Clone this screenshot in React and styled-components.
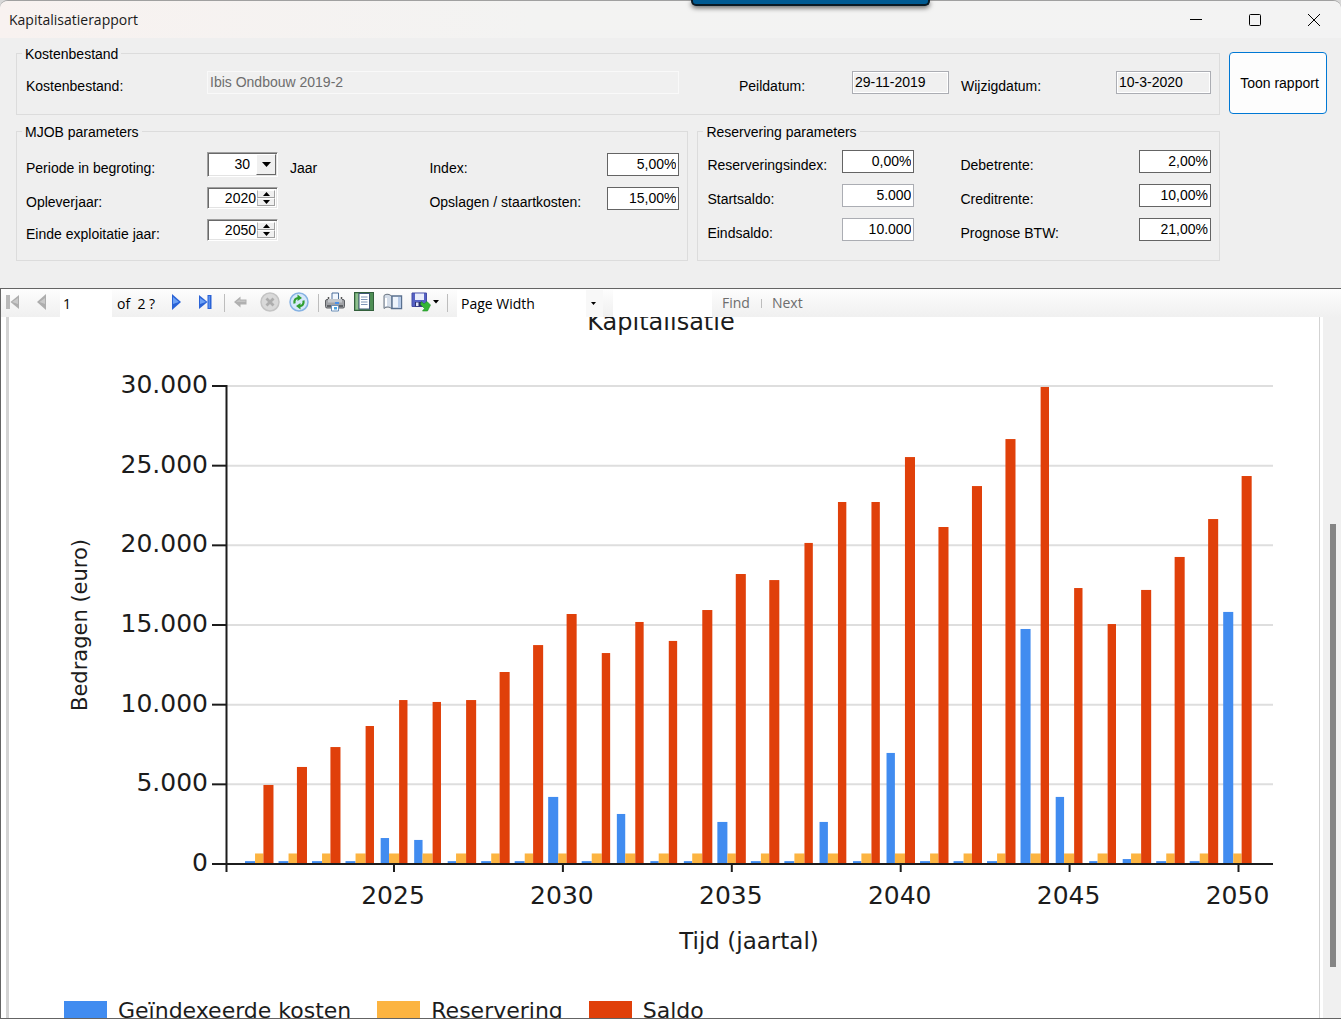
import React from 'react';
import styled, { createGlobalStyle } from 'styled-components';

const GlobalStyle = createGlobalStyle`
  * {
    box-sizing: border-box;
  }
  body {
    margin: 0;
    background: #d8d8d8;
    overflow: hidden;
  }
  button, input, select {
    font: inherit;
    color: inherit;
  }
`;

// Window
const Window = styled.div`
  display: flex;
  flex-direction: column;
  height: 100vh;
  border-top: 1px solid #a0a0a0;
  border-radius: 8px 8px 0 0;
  overflow: hidden;
  background: #efefef;
  color: #000;
  font-family: 'Liberation Sans', Arial, sans-serif;
  font-size: 14px;
`;

const TitleBar = styled.header`
  display: flex;
  align-items: center;
  justify-content: space-between;
  flex: none;
  height: 37px;
  padding-left: 9px;
  background: linear-gradient(90deg, #f8f2f0, #f3f3f2 40%, #f3f3f3);
`;

const Title = styled.h1`
  margin: 0;
  font-family: 'Open Sans', sans-serif;
  font-size: 14px;
  font-weight: 400;
  color: #1a1a1a;
`;

const WindowButtons = styled.div`
  display: flex;
  gap: 5px;
`;

const WindowButton = styled.button`
  display: flex;
  align-items: center;
  justify-content: center;
  width: 54px;
  height: 36px;
  padding: 0;
  border: none;
  background: none;
`;

// Edge of the screen-share bar hanging over the title bar
const ShareBar = styled.div`
  position: absolute;
  top: 0;
  left: 691px;
  width: 239px;
  height: 6px;
  border: solid #0a1a24;
  border-width: 0 2px 2px;
  border-radius: 0 0 5px 5px;
  background: #005a92;
  box-shadow: 0 2px 5px rgba(0, 0, 0, 0.6);
`;

// Parameter form
const Form = styled.form`
  display: grid;
  grid-template-columns: minmax(0, 673fr) minmax(0, 523fr) 98px;
  gap: 8px 9px;
  flex: none;
  padding: 7px 14px 27px 16px;
`;

const Group = styled.fieldset`
  min-width: 0;
  margin: 0;
  padding: ${props => props.top || 8}px 8px ${props => props.bottom || 14}px 9px;
  border: 1px solid #dcdcdc;
  ${props => props.wide && `grid-column: span 2;`}
`;

const Legend = styled.legend`
  margin-left: -4px;
  padding: 2px 3px 0;
  line-height: 14px;
`;

const Fields = styled.div`
  display: grid;
  grid-template-columns: ${props => props.columns};
  grid-template-rows: ${props => props.rows};
  align-items: center;
`;

const Label = styled.label`
  padding-top: 8px;
  padding-left: ${props => props.indent || 0}px;
  line-height: 16px;
  white-space: nowrap;
`;

const TextBox = styled.input`
  width: 100%;
  height: 23px;
  min-width: 0;
  padding: 0 2px;
  border: 1px solid ${props => (props.$soft ? '#abadb3' : '#646464')};
  border-radius: 0;
  background: #fff;
  text-align: right;
  outline: none;
`;

const DateBox = styled(TextBox)`
  border-color: #abadb3;
  background: #f0f0f0;
  box-shadow: inset 0 0 0 1px #fff;
  text-align: left;
`;

const FileBox = styled(TextBox)`
  border-color: #f9f9f9;
  background: #f0f0f0;
  color: #6d6d6d;
  text-align: left;
`;

const Sunken = styled.div`
  display: grid;
  grid-template-columns: minmax(0, 1fr) auto;
  width: 71px;
  height: ${props => props.height}px;
  border: 1px solid;
  border-color: #a0a0a0 #fff #fff #a0a0a0;
  box-shadow: inset 1px 1px 0 #696969, inset -1px -1px 0 #e3e3e3;
  background: #fff;
`;

const Select = styled.select`
  grid-area: 1 / 1 / 2 / 3;
  padding: 0 27px 0 4px;
  border: none;
  background: none;
  appearance: none;
  text-align: right;
  text-align-last: right;
  outline: none;
`;

const SelectArrow = styled.span`
  grid-area: 1 / 2;
  display: flex;
  align-items: center;
  justify-content: center;
  width: 20px;
  margin: 1px 1px 1px 0;
  border: 1px solid;
  border-color: #fff #696969 #696969 #fff;
  background: #f0f0f0;
  pointer-events: none;
`;

const SpinInput = styled.input`
  min-width: 0;
  width: 100%;
  padding: 0 1px 0 0;
  border: none;
  background: none;
  text-align: right;
  outline: none;
`;

const SpinButtons = styled.div`
  display: flex;
  flex-direction: column;
  width: 18px;
  margin: 2px 2px 2px 0;
`;

const SpinButton = styled.button`
  display: flex;
  flex: 1;
  align-items: center;
  justify-content: center;
  min-height: 0;
  padding: 0;
  border: 1px solid;
  border-color: #fff #a0a0a0 #a0a0a0 #b4b4b4;
  background: #f0f0f0;
`;

const ReportButton = styled.button`
  height: 62px;
  margin-top: 7px;
  padding: 0 0 0 3px;
  border: 1px solid #0078d4;
  border-radius: 4px;
  background: #fdfdfd;
  white-space: nowrap;
`;

// Report viewer
const Viewer = styled.section`
  display: flex;
  flex: 1;
  flex-direction: column;
  min-height: 0;
  border: solid #646464;
  border-width: 1px 0 1px 1px;
  background: #fff;
`;

const Toolbar = styled.div`
  display: flex;
  align-items: center;
  flex: none;
  height: 28px;
  background: linear-gradient(#fdfdfd, #f0f0f0);
  font-family: 'Open Sans', sans-serif;
`;

const ToolButton = styled.button`
  display: flex;
  align-items: center;
  justify-content: center;
  gap: 2px;
  flex: none;
  width: ${props => (props.$menu ? 29 : 23)}px;
  height: 26px;
  margin: 0 3px;
  padding: 0 0 2px;
  border: none;
  background: none;
  &:first-child {
    margin-left: 0;
  }
`;

const Separator = styled.span`
  flex: none;
  width: 1px;
  height: ${props => (props.$small ? 9 : 18)}px;
  margin: ${props => (props.$small ? '0 0 0 11px' : '0 1px 0 5px')};
  background: #bdbdbd;
`;

const PageInput = styled.input`
  width: 52px;
  height: 27px;
  margin-left: 4px;
  padding: 0 3px;
  border: none;
  background: #fff;
`;

const PageCount = styled.span`
  width: 49px;
  padding-left: 5px;
  white-space: pre;
`;

const ZoomBox = styled.div`
  display: grid;
  grid-template-columns: 1fr 17px;
  align-items: center;
  justify-items: center;
  width: 146px;
  height: 27px;
  margin-left: 8px;
  background: linear-gradient(90deg, #fff 129px, #f8f8f8 129px);
`;

const ZoomSelect = styled.select`
  grid-area: 1 / 1 / 2 / 3;
  width: 100%;
  height: 27px;
  padding: 0 4px;
  border: none;
  background: none;
  appearance: none;
  outline: none;
`;

const ZoomArrow = styled.svg`
  grid-area: 1 / 2;
  margin-right: 3px;
  pointer-events: none;
`;

const SearchInput = styled.input`
  width: 99px;
  height: 27px;
  margin-left: 10px;
  border: none;
  background: #fff;
`;

const TextButton = styled.button`
  margin-left: 10px;
  padding: 0 0 2px;
  border: none;
  background: none;
  color: #6d6d6d;
`;

const Viewport = styled.div`
  display: flex;
  flex: 1;
  min-height: 0;
  padding-left: 5px;
`;

const Page = styled.div`
  flex: 1;
  min-width: 0;
  margin-right: 3px;
  border: solid #d3d3d3;
  border-width: 0 1px 0 3px;
  overflow: hidden;
  font-family: 'DejaVu Sans', Verdana, sans-serif;
  color: #1c1c1c;
`;

const Plot = styled.svg`
  display: block;
  width: 100%;
  height: auto;
  fill: #1c1c1c;
`;

const ChartLegend = styled.ul`
  display: flex;
  gap: 26px;
  margin: 1px 0 0 55px;
  padding: 0;
  list-style: none;
  font-size: 22px;
  line-height: 26px;
`;

const LegendItem = styled.li`
  display: flex;
  align-items: center;
  gap: 11px;
  white-space: nowrap;
`;

const Swatch = styled.span`
  width: 43px;
  height: 20px;
  background: ${props => props.color};
`;

const ScrollTrack = styled.div`
  display: grid;
  grid-template-rows: 207fr 443fr 51fr;
  flex: none;
  width: 18px;
  padding: 0 5px 0 7px;
  background: #f0f0f0;
`;

const ScrollThumb = styled.div`
  grid-row: 2;
  background: #858585;
`;

// Chart data, amounts in euro
const BLUE = '#418cf0';
const ORANGE = '#fcb441';
const RED = '#e0400a';

const RESERVE = 660;
const FIRST_YEAR = 2021;
const saldo = [
  4960, 6090, 7340, 8660, 10290, 10170, 10290, 12050, 13740, 15690,
  13240, 15190, 14000, 15940, 18200, 17820, 20150, 22720, 22720, 25540,
  21150, 23720, 26670, 29940, 17320, 15060, 17200, 19270, 21650, 24350,
];
const costs = {
  2025: 1630,
  2026: 1510,
  2030: 4210,
  2032: 3140,
  2035: 2640,
  2038: 2640,
  2040: 6970,
  2044: 14750,
  2045: 4210,
  2047: 310,
  2050: 15820,
};

const PLOT = { left: 217, right: 1263, base: 547, height: 478, max: 30000 };
const yOf = value => PLOT.base - (value / PLOT.max) * PLOT.height;
const xOfYear = year => 385 + (year - 2025) * 33.78;
// bar edges snap to the coarse pixel grid of the chart control
const edge = (index, bar) => 236 + Math.floor(0.46 + 5.57 * bar + 20.15 * index) * 1.675;
const format = value => value.toLocaleString('de-DE');

function Bar({ index, slot, value, color }) {
  const x = edge(index, slot);
  const y = yOf(value);
  return <rect x={x} y={y} width={edge(index, slot + 1) - x} height={PLOT.base - y} fill={color} />;
}

function Chart() {
  return (
    <Plot viewBox="0 0 1310 680" role="img" aria-label="Kapitalisatie">
      <text x="652" y="13" fontSize="24" textAnchor="middle">Kapitalisatie</text>
      {[5000, 10000, 15000, 20000, 25000, 30000].map(v => (
        <line key={v} x1={PLOT.left} x2={PLOT.right + 1} y1={yOf(v)} y2={yOf(v)} stroke="#dedede" strokeWidth="2" />
      ))}
      {saldo.map((value, i) => {
        const year = FIRST_YEAR + i;
        return (
          <g key={year}>
            <Bar index={i} slot={0} value={costs[year] || 180} color={BLUE} />
            <Bar index={i} slot={1} value={RESERVE} color={ORANGE} />
            <Bar index={i} slot={2} value={value} color={RED} />
          </g>
        );
      })}
      <g stroke="#1c1c1c" strokeWidth="2">
        <line x1="217.5" x2="217.5" y1="68" y2="555" />
        <line x1="203" x2={PLOT.right + 1} y1={PLOT.base} y2={PLOT.base} />
        {[5000, 10000, 15000, 20000, 25000, 30000].map(v => (
          <line key={v} x1="203" x2="217" y1={yOf(v)} y2={yOf(v)} />
        ))}
        {[2025, 2030, 2035, 2040, 2045, 2050].map(year => (
          <line key={year} x1={xOfYear(year)} x2={xOfYear(year)} y1={PLOT.base} y2="555" />
        ))}
      </g>
      <g fontSize="25">
        {[0, 5000, 10000, 15000, 20000, 25000, 30000].map(v => (
          <text key={v} x="199" y={yOf(v) + 7} textAnchor="end">{format(v)}</text>
        ))}
        {[2025, 2030, 2035, 2040, 2045, 2050].map(year => (
          <text key={year} x={xOfYear(year) - 1} y="587" textAnchor="middle">{year}</text>
        ))}
      </g>
      <g textAnchor="middle">
        <text x="740" y="632" fontSize="23">Tijd (jaartal)</text>
        <text transform="translate(78 308) rotate(-90)" fontSize="21">Bedragen (euro)</text>
      </g>
    </Plot>
  );
}

// Toolbar icons
const FirstIcon = () => (
  <svg width="14" height="16" viewBox="0 0 14 16">
    <rect x="0" y="1" width="4" height="14" fill="#b9b9b9" />
    <path d="M13 1v14L4.500 8z" fill="#adadad" />
    <path d="M12 4v6L6 8z" fill="#c9c9c9" />
  </svg>
);

const PrevIcon = () => (
  <svg width="10" height="16" viewBox="0 0 10 16">
    <path d="M9 0v16L0 8z" fill="#adadad" />
    <path d="M8 4v6L2.500 8z" fill="#c9c9c9" />
  </svg>
);

const NextIcon = () => (
  <svg width="10" height="16" viewBox="0 0 10 16">
    <path d="M1 0v16L10 8z" fill="#2a63d6" />
    <path d="M2 3v7l6-2z" fill="#6ea2f5" />
  </svg>
);

const LastIcon = () => (
  <svg width="14" height="16" viewBox="0 0 14 16">
    <path d="M1 1v14l8.500-7z" fill="#2a63d6" />
    <path d="M2 4v6l6-2z" fill="#6ea2f5" />
    <rect x="9.500" y="1" width="4" height="14" fill="#2a63d6" />
    <rect x="10.500" y="2" width="1.500" height="12" fill="#5b90ee" />
  </svg>
);

const BackIcon = () => (
  <svg width="13" height="12" viewBox="0 0 13 12">
    <path d="M0 6L6.500 0.500V3.500H12.500V8.500H6.500V11.500z" fill="#b0b0b0" />
    <path d="M2 6l4-3v1.500h5.500V6z" fill="#c4c4c4" />
  </svg>
);

const StopIcon = () => (
  <svg width="20" height="20" viewBox="0 0 20 20">
    <circle cx="10" cy="10" r="9" fill="#d9d9d9" stroke="#c4c4c4" strokeWidth="1.500" />
    <path d="M6.500 6.500l7 7M13.500 6.500l-7 7" stroke="#adadad" strokeWidth="2.800" />
  </svg>
);

const RefreshIcon = () => (
  <svg width="20" height="20" viewBox="0 0 20 20">
    <circle cx="10" cy="10" r="9" fill="#d5e8fa" stroke="#86b2e3" strokeWidth="1.500" />
    <path d="M5.500 11.500C5 8 6.500 6 9.500 6" fill="none" stroke="#2f9e2f" strokeWidth="2.200" />
    <path d="M8.500 2.500L13 6L8.500 9z" fill="#2f9e2f" />
    <path d="M14.500 8.500C15 12 13.500 14 10.500 14" fill="none" stroke="#2f9e2f" strokeWidth="2.200" />
    <path d="M11.500 11L7 14l4.500 3.500z" fill="#2f9e2f" />
  </svg>
);

const PrintIcon = () => (
  <svg width="20" height="20" viewBox="0 0 20 20">
    <path d="M7 1h6.500v7H7z" fill="#f2f8ff" stroke="#4d6f9b" />
    <path d="M3.500 5v5M16.500 5v5" stroke="#555" strokeWidth="1.500" />
    <rect x="0.500" y="7.500" width="19" height="8.500" rx="1.500" fill="#a0a2a6" stroke="#5c5e62" />
    <rect x="3" y="7" width="14" height="3.500" fill="#c3c6ca" />
    <rect x="10" y="10" width="4" height="2" fill="#4a90e8" />
    <path d="M2 14h16" stroke="#4b4d50" strokeWidth="1.500" />
    <path d="M6.500 13.500h7v5.500h-7z" fill="#fff" stroke="#6b8fb8" />
    <rect x="9" y="15" width="3" height="2.500" fill="#4aa3e0" />
  </svg>
);

const LayoutIcon = () => (
  <svg width="20" height="20" viewBox="0 0 20 20">
    <rect x="0.500" y="0.500" width="19" height="18" fill="#4f8f55" stroke="#33603c" />
    <rect x="1.500" y="1.500" width="3" height="16" fill="#8fc08f" />
    <rect x="5" y="1.500" width="10.500" height="15.500" fill="#fff" stroke="#3e5675" />
    <path d="M7 5h6.500M7 7.500h6.500M7 10h6.500M7 12.500h6.500" stroke="#7d94b5" />
  </svg>
);

const SetupIcon = () => (
  <svg width="20" height="18" viewBox="0 0 20 18">
    <path d="M1 2.500C3.500 0.500 6.500 1 9 3.500V16C6.500 13.500 3.500 13.500 1 15.500z" fill="#d4dde9" stroke="#6a7480" />
    <path d="M3 13V5" stroke="#fff" strokeWidth="2" />
    <path d="M9 3h9.500v12.500H9z" fill="#eef4fc" stroke="#59708f" strokeWidth="1.400" />
    <path d="M15 4h3v11h-3z" fill="#b7cbe8" />
  </svg>
);

const SaveIcon = () => (
  <svg width="20" height="20" viewBox="0 0 20 20">
    <path d="M1 1h14.500v13.500H1z" fill="#5561c4" stroke="#454ca5" />
    <rect x="4" y="1.500" width="9" height="6.500" fill="#e9edfb" />
    <rect x="4" y="10" width="7" height="4.500" fill="#2b3070" />
    <rect x="5" y="10.500" width="2.500" height="3.500" fill="#dfe4fa" />
    <path d="M10.500 9.500L13 12l3-2.500 3.500 3.500-3 6H11.500l2-2.500-4-4z" fill="#35b535" stroke="#1c8f24" strokeWidth="0.600" />
  </svg>
);

const Caret = () => (
  <svg width="6" height="4" viewBox="0 0 6 4">
    <path d="M0 0h6L3 3.500z" fill="#000" />
  </svg>
);

function SpinBox({ id, value }) {
  return (
    <Sunken height={22}>
      <SpinInput id={id} defaultValue={value} />
      <SpinButtons>
        <SpinButton type="button" aria-label="Omhoog">
          <svg width="7" height="4" viewBox="0 0 7 4"><path d="M3.500 0L7 4H0z" /></svg>
        </SpinButton>
        <SpinButton type="button" aria-label="Omlaag">
          <svg width="7" height="4" viewBox="0 0 7 4"><path d="M0 0h7L3.500 4z" /></svg>
        </SpinButton>
      </SpinButtons>
    </Sunken>
  );
}

function ParameterForm() {
  return (
    <Form onSubmit={e => e.preventDefault()}>
      <Group wide bottom={19}>
        <Legend>Kostenbestand</Legend>
        <Fields columns="181px minmax(0, 1fr) 173px 97px 167px 95px" rows="26px">
          <Label htmlFor="bestand">Kostenbestand:</Label>
          <FileBox id="bestand" defaultValue="Ibis Ondbouw 2019-2" readOnly />
          <Label htmlFor="peildatum" indent={60}>Peildatum:</Label>
          <DateBox id="peildatum" defaultValue="29-11-2019" readOnly />
          <Label htmlFor="wijzigdatum" indent={12}>Wijzigdatum:</Label>
          <DateBox id="wijzigdatum" defaultValue="10-3-2020" readOnly />
        </Fields>
      </Group>
      <ReportButton type="submit">Toon rapport</ReportButton>
      <Group>
        <Legend>MJOB parameters</Legend>
        <Fields columns="181px 71px minmax(0, 1fr) 178px 72px" rows="34px 34px 30px">
          <Label htmlFor="periode">Periode in begroting:</Label>
          <Sunken height={25}>
            <Select id="periode" defaultValue="30">
              <option>30</option>
            </Select>
            <SelectArrow>
              <svg width="9" height="5" viewBox="0 0 9 5"><path d="M0 0h9L4.500 5z" /></svg>
            </SelectArrow>
          </Sunken>
          <Label as="span" indent={12}>Jaar</Label>
          <Label htmlFor="index">Index:</Label>
          <TextBox id="index" defaultValue="5,00%" />

          <Label htmlFor="oplever">Opleverjaar:</Label>
          <SpinBox id="oplever" value="2020" />
          <span />
          <Label htmlFor="opslagen">Opslagen / staartkosten:</Label>
          <TextBox id="opslagen" defaultValue="15,00%" />

          <Label htmlFor="einde">Einde exploitatie jaar:</Label>
          <SpinBox id="einde" value="2050" />
        </Fields>
      </Group>
      <Group top={5}>
        <Legend>Reservering parameters</Legend>
        <Fields columns="135px 72px minmax(0, 1fr) 72px" rows="repeat(3, 34px)">
          <Label htmlFor="resindex">Reserveringsindex:</Label>
          <TextBox id="resindex" defaultValue="0,00%" />
          <Label htmlFor="debet" indent={46}>Debetrente:</Label>
          <TextBox id="debet" defaultValue="2,00%" />

          <Label htmlFor="start">Startsaldo:</Label>
          <TextBox id="start" $soft defaultValue="5.000" />
          <Label htmlFor="credit" indent={46}>Creditrente:</Label>
          <TextBox id="credit" defaultValue="10,00%" />

          <Label htmlFor="eind">Eindsaldo:</Label>
          <TextBox id="eind" $soft defaultValue="10.000" />
          <Label htmlFor="btw" indent={46}>Prognose BTW:</Label>
          <TextBox id="btw" defaultValue="21,00%" />
        </Fields>
      </Group>
    </Form>
  );
}

function ReportToolbar() {
  return (
    <Toolbar>
      <ToolButton aria-label="First page" disabled><FirstIcon /></ToolButton>
      <ToolButton aria-label="Previous page" disabled><PrevIcon /></ToolButton>
      <PageInput aria-label="Current page" defaultValue="1" />
      <PageCount>of  2 ?</PageCount>
      <ToolButton aria-label="Next page"><NextIcon /></ToolButton>
      <ToolButton aria-label="Last page"><LastIcon /></ToolButton>
      <Separator />
      <ToolButton aria-label="Back" disabled><BackIcon /></ToolButton>
      <ToolButton aria-label="Stop" disabled><StopIcon /></ToolButton>
      <ToolButton aria-label="Refresh"><RefreshIcon /></ToolButton>
      <Separator />
      <ToolButton aria-label="Print"><PrintIcon /></ToolButton>
      <ToolButton aria-label="Print layout"><LayoutIcon /></ToolButton>
      <ToolButton aria-label="Page setup"><SetupIcon /></ToolButton>
      <ToolButton aria-label="Export" $menu><SaveIcon /><Caret /></ToolButton>
      <Separator />
      <ZoomBox>
        <ZoomSelect aria-label="Zoom" defaultValue="Page Width">
          <option>Page Width</option>
        </ZoomSelect>
        <ZoomArrow width="5" height="3" viewBox="0 0 5 3"><path d="M0 0h5L2.500 3z" /></ZoomArrow>
      </ZoomBox>
      <SearchInput aria-label="Find text" />
      <TextButton disabled>Find</TextButton>
      <Separator $small />
      <TextButton disabled>Next</TextButton>
    </Toolbar>
  );
}

export default function App() {
  return (
    <>
      <GlobalStyle />
      <Window>
        <TitleBar>
          <Title>Kapitalisatierapport</Title>
          <WindowButtons>
            <WindowButton aria-label="Minimize">
              <svg width="12" height="12" viewBox="0 0 12 12"><path d="M0 5.500h12" stroke="#000" /></svg>
            </WindowButton>
            <WindowButton aria-label="Maximize">
              <svg width="12" height="12" viewBox="0 0 12 12">
                <rect x="0.500" y="0.500" width="11" height="11" rx="1" fill="none" stroke="#000" />
              </svg>
            </WindowButton>
            <WindowButton aria-label="Close">
              <svg width="12" height="12" viewBox="0 0 12 12"><path d="M0 0l12 12M12 0L0 12" stroke="#000" /></svg>
            </WindowButton>
          </WindowButtons>
        </TitleBar>
        <ParameterForm />
        <Viewer>
          <ReportToolbar />
          <Viewport>
            <Page>
              <Chart />
              <ChartLegend>
                <LegendItem><Swatch color={BLUE} />Geïndexeerde kosten</LegendItem>
                <LegendItem><Swatch color={ORANGE} />Reservering</LegendItem>
                <LegendItem><Swatch color={RED} />Saldo</LegendItem>
              </ChartLegend>
            </Page>
            <ScrollTrack>
              <ScrollThumb />
            </ScrollTrack>
          </Viewport>
        </Viewer>
      </Window>
      <ShareBar />
    </>
  );
}
